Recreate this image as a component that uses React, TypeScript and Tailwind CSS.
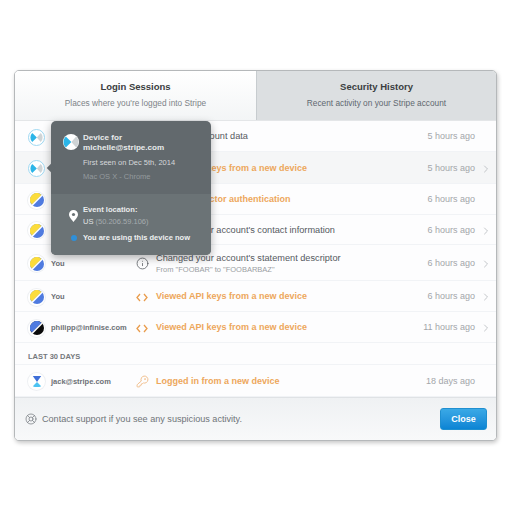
import { ChevronRight, Info, KeyRound, LifeBuoy } from "lucide-react";
import type { ReactNode } from "react";

type AvatarKind = "device" | "yellow" | "black" | "jack";

interface EventRowProps {
  avatar: AvatarKind;
  ring?: boolean;
  who?: string;
  icon?: "info" | "code" | "key";
  title: string;
  sub?: string;
  warn?: boolean;
  time: string;
  arrow?: boolean;
  active?: boolean;
  height: string;
}

const DeviceMark = ({ size }: { size: number }) => (
  <svg width={size} height={size} viewBox="0 0 20 20">
    <circle cx="10" cy="10" r="10" fill="#fff" />
    <path d="M3.5 3.2 L10.5 10 L3.5 16.8 A9.5 9.5 0 0 1 3.5 3.2 Z" fill="#2bb5e8" />
    <path d="M16.5 3.2 L10.5 10 L16.5 16.8 A9.5 9.5 0 0 0 16.5 3.2 Z" fill="#cfd4d6" />
  </svg>
);

const Avatar = ({ kind, ring }: { kind: AvatarKind; ring?: boolean }) => (
  <div
    className={`flex h-[17px] w-[17px] shrink-0 items-center justify-center rounded-full bg-white ${
      ring ? "border border-[#9ed8f2]" : "shadow-[0_0_0_1px_#eef0f3]"
    }`}
  >
    {kind === "device" && <DeviceMark size={13} />}
    {kind === "yellow" && (
      <svg width="14" height="14" viewBox="0 0 20 20">
        <circle cx="10" cy="10" r="10" fill="#4f7be0" />
        <path d="M13.5 0.6 A10 10 0 0 0 0.6 13.5 L3 16.5 L16.5 3 Z" fill="#fbdc3c" />
        <path d="M2 17 L17 2 L18.4 3.6 L3.6 18.4 Z" fill="#fff" />
      </svg>
    )}
    {kind === "black" && (
      <svg width="14" height="14" viewBox="0 0 20 20">
        <circle cx="10" cy="10" r="10" fill="#0a0a0a" />
        <path d="M13.5 0.6 A10 10 0 0 0 0.6 13.5 L3 16.5 L16.5 3 Z" fill="#4f7be0" />
        <path d="M2 17 L17 2 L18.4 3.6 L3.6 18.4 Z" fill="#fff" />
      </svg>
    )}
    {kind === "jack" && (
      <svg width="12" height="14" viewBox="0 0 20 22">
        <path d="M3 1 H17 L10 11 Z" fill="#3f6fd8" />
        <path d="M10 11 L17 18 A9 4 0 0 1 3 18 Z" fill="#4cc3f2" />
      </svg>
    )}
  </div>
);

const RowIcon = ({ icon, warn }: { icon?: EventRowProps["icon"]; warn?: boolean }) => {
  if (icon === "info") return <Info size={13} strokeWidth={1.4} className="text-[#55595e]" />;
  if (icon === "key") return <KeyRound size={13} strokeWidth={1.5} className="text-[#eeb377]" />;
  if (icon === "code")
    return (
      <svg width="12" height="9" viewBox="0 0 12 9" fill="none" stroke={warn ? "#e99c4c" : "#555"} strokeWidth="1.3">
        <path d="M4 1 L1 4.5 L4 8" />
        <path d="M8 1 L11 4.5 L8 8" />
      </svg>
    );
  return null;
};

const EventRow = ({ avatar, ring, who, icon, title, sub, warn, time, arrow, active, height }: EventRowProps) => (
  <div
    className={`flex items-center border-b border-[#f1f3f6] pl-[13px] pt-[2px] ${height} ${
      active ? "bg-[#f5f6f7]" : "bg-[#fdfdfe]"
    }`}
  >
    <Avatar kind={avatar} ring={ring} />
    <div className="w-[88px] shrink-0 truncate pl-[6px] text-[7.5px] font-bold text-[#6c7075]">{who}</div>
    <div className="flex w-[18px] shrink-0 justify-center">
      <RowIcon icon={icon} warn={warn} />
    </div>
    <div className="ml-[5px] min-w-0 flex-1">
      <div className={warn ? "text-[9px] font-bold text-[#eda75c]" : "text-[9.2px] text-[#55595e]"}>{title}</div>
      {sub && <div className="-mt-px text-[7.5px] leading-[10px] text-[#9a9ea3]">{sub}</div>}
    </div>
    <div className="text-[9px] text-[#a3a6aa]">{time}</div>
    <div className="flex w-[21px] shrink-0 justify-center">
      {arrow && <ChevronRight size={12} strokeWidth={1.6} className="text-[#b4b7bb]" />}
    </div>
  </div>
);

const TabHead = ({ title, sub, selected }: { title: string; sub: string; selected?: boolean }) => (
  <div
    className={`flex flex-col items-center justify-center gap-[4px] pb-[2px] ${
      selected
        ? "w-[241px] bg-gradient-to-b from-[#ffffff] to-[#f3f5f6]"
        : "flex-1 border-l border-[#c7cccf] bg-[#dcdfe1]"
    }`}
  >
    <div className="text-[9.5px] font-bold leading-[14px] text-[#3a3d40]">{title}</div>
    <div className={`text-[8.3px] leading-[11px] ${selected ? "text-[#7d8388]" : "text-[#5f6870]"}`}>{sub}</div>
  </div>
);

const PopText = ({ children, className }: { children: ReactNode; className: string }) => (
  <div className={className}>{children}</div>
);

const DevicePopover = () => (
  <div className="absolute left-[36px] top-[50px] z-10 w-[160px] rounded-[5px] bg-[#62696d] shadow-[0_3px_8px_rgba(0,0,0,0.3)]">
    <div className="absolute left-[-3px] top-[44px] h-[6px] w-[6px] rotate-45 bg-[#62696d]" />
    <div className="flex h-[73px] gap-[4px] pl-[12px] pt-[12px]">
      <div className="mt-[1px] shrink-0">
        <DeviceMark size={16} />
      </div>
      <div className="text-[#e9ebec]">
        <PopText className="text-[8.1px] font-bold leading-[10px]">Device for</PopText>
        <PopText className="text-[8.1px] font-bold leading-[10px]">michelle@stripe.com</PopText>
        <PopText className="mt-[5px] text-[7.5px] leading-[10px] text-[#d5d8da]">First seen on Dec 5th, 2014</PopText>
        <PopText className="mt-[4px] text-[7.5px] leading-[10px] text-[#949a9e]">Mac OS X - Chrome</PopText>
      </div>
    </div>
    <div className="flex h-[61px] flex-col gap-[6px] rounded-b-[5px] bg-[#6b7376] pl-[18px] pt-[11px]">
      <div className="flex items-center gap-[5px]">
        <svg width="9" height="12" viewBox="0 0 9 12" className="shrink-0">
          <path d="M4.5 0 A4.5 4.5 0 0 1 9 4.5 C9 7 6 10 4.5 12 C3 10 0 7 0 4.5 A4.5 4.5 0 0 1 4.5 0 Z" fill="#fff" />
          <circle cx="4.5" cy="4.5" r="1.6" fill="#6b7376" />
        </svg>
        <div>
          <PopText className="text-[7.6px] font-bold leading-[10px] text-[#e9ebec]">Event location:</PopText>
          <PopText className="mt-[2px] text-[7.5px] leading-[10px] text-[#e0e3e4]">
            US <span className="text-[#a5abae]">(50.206.59.106)</span>
          </PopText>
        </div>
      </div>
      <div className="flex items-center gap-[5px]">
        <div className="ml-[2px] mr-[1px] h-[6px] w-[6px] shrink-0 rounded-full bg-[#2f8fd8]" />
        <PopText className="text-[7.5px] font-bold leading-[10px] text-[#eef0f1]">You are using this device now</PopText>
      </div>
    </div>
  </div>
);

export default function App() {
  return (
    <div className="h-[512px] w-[512px] bg-white pl-[14px] pt-[70px] font-['Liberation_Sans',Arial,sans-serif]">
      <div className="relative flex h-[371px] w-[483px] flex-col rounded-[5px] border border-[#b5b8ba] bg-white shadow-[1px_2px_4px_rgba(0,0,0,0.22)]">
        <div className="flex h-[50px] shrink-0 overflow-hidden rounded-t-[4px] border-b border-[#e4e6e8]">
          <TabHead selected title="Login Sessions" sub="Places where you're logged into Stripe" />
          <TabHead title="Security History" sub="Recent activity on your Stripe account" />
        </div>

        <div className="flex-1">
          <EventRow height="h-[31px]" avatar="device" ring title="Exported account data" time="5 hours ago" />
          <EventRow height="h-[32px]" avatar="device" ring active warn icon="code" title="Viewed API keys from a new device" time="5 hours ago" arrow />
          <EventRow height="h-[31px]" avatar="yellow" warn title="Enabled 2-factor authentication" time="6 hours ago" />
          <EventRow height="h-[30px]" avatar="yellow" title="Changed your account's contact information" time="6 hours ago" arrow />
          <EventRow height="h-[36px]" avatar="yellow" who="You" icon="info" title="Changed your account's statement descriptor" sub={'From "FOOBAR" to "FOOBARBAZ"'} time="6 hours ago" arrow />
          <EventRow height="h-[31px]" avatar="yellow" who="You" warn icon="code" title="Viewed API keys from a new device" time="6 hours ago" arrow />
          <EventRow height="h-[31px]" avatar="black" who="philipp@infinise.com" warn icon="code" title="Viewed API keys from a new device" time="11 hours ago" arrow />
          <div className="flex h-[22px] items-center border-b border-[#f1f3f6] bg-[#fdfdfe] pl-[13px] pt-[7px] text-[7.5px] font-bold text-[#74787c]">
            LAST 30 DAYS
          </div>
          <EventRow height="h-[32px]" avatar="jack" who="jack@stripe.com" warn icon="key" title="Logged in from a new device" time="18 days ago" />
        </div>

        <div className="flex h-[43px] shrink-0 items-center rounded-b-[4px] border-t border-[#dfe2e5] bg-gradient-to-b from-[#eff1f3] to-[#f8f9fa] pl-[10px] pr-[9px]">
          <LifeBuoy size={12} strokeWidth={1.6} className="text-[#7f8489]" />
          <div className="ml-[5px] flex-1 pt-[2px] text-[9.1px] text-[#6f7478]">Contact support if you see any suspicious activity.</div>
          <button className="h-[22px] w-[47px] rounded-[3px] border border-[#1f8fd0] bg-gradient-to-b from-[#3aa9e6] to-[#0a84d4] pt-[1px] text-[9px] font-bold text-white">
            Close
          </button>
        </div>

        <DevicePopover />
      </div>
    </div>
  );
}
